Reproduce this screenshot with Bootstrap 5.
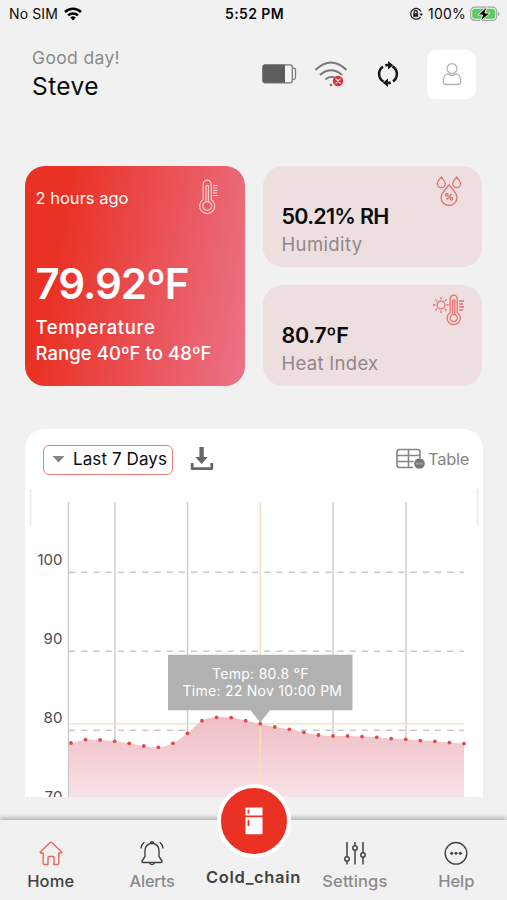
<!DOCTYPE html>
<html lang="en">
<head>
<meta charset="utf-8">
<meta name="viewport" content="width=device-width, initial-scale=1">
<title>Cold chain</title>
<link href="https://cdn.jsdelivr.net/npm/bootstrap@5.3.0/dist/css/bootstrap.min.css" rel="stylesheet">
<style>
body{font-family:Inter,"Liberation Sans",sans-serif;background:#f1f1f1;color:#0b0b0b}
svg{display:block;flex:none}
.screen{width:507px;height:900px}
.statusbar{height:28px;font-size:14px;line-height:28px;padding:0 7px 0 9px}
.st-side{width:200px}
.topbar{height:56px;margin-top:18px;padding:0 31px 0 32px}
.greet{font-size:17.5px;line-height:24px;color:#8b8b8b}
.who{font-size:24.5px;line-height:33px}
.avatar{width:49px;height:49px;border-radius:9px}
.tiles{margin-top:64px;padding:0 25px;height:220px;gap:18px}
.temp{width:220px;border-radius:20px;background:linear-gradient(100deg,#e93223 0,#e93225 18%,#ea4b4d 50%,#eb7488 100%);padding:20px 11px 0 10.5px}
.ago{font-size:16.500px;line-height:24px}
.big{font-size:42px;line-height:50px;font-weight:600}
.rng{font-size:18.5px;line-height:26px;font-weight:500}
.tile{height:101px;border-radius:20px;background:#eddfe0;padding:36px 18px 0 18.5px}
.val{font-size:21.5px;line-height:28px;font-weight:600}
.lbl{font-size:18.5px;line-height:29px;color:#8f8889}
.panel{margin:42.5px 24.500px 0 25px;height:368.500px;border-radius:20px 20px 0 0}
.tools{height:55.500px;padding:16px 13.500px 0 18px}
.drop{width:130px;height:30px;border:1.4px solid #ea7b76;border-radius:6px;font-size:17px}
.tbl{font-size:16.5px;color:#868686}
.tabs{height:80px;margin-top:23px;box-shadow:0 -2px 5px rgba(0,0,0,.3);font-size:16.5px;font-weight:500;line-height:23px;background:#f1f1f1}
.tabs a{width:101.4px;color:#8a8a8a;text-decoration:none;padding-top:20px;height:80px}
.tabs a svg{margin-bottom:4px}
.fab{width:74px;height:74px;background:#e93223;border:4px solid #fff;top:-36px;left:14px}
.dark{color:#424242!important}
</style>
</head>
<body>
<div class="screen d-flex flex-column overflow-hidden">
<div class="statusbar d-flex justify-content-between">
 <div class="st-side d-flex align-items-center"><span class="t-sim">No SIM</span>
  <svg style="margin-left:6px" width="18" height="14" viewBox="0 0 18 14" fill="none" stroke="#000" stroke-width="2.5"><path d="M1 5a11.6 11.6 0 0 1 16 0M4 8.4a7.3 7.3 0 0 1 10 0"/><path d="M6.2 10.6a4 4 0 0 1 5.6 0L9 13.5z" fill="#000" stroke="none"/></svg></div>
 <span class="t-clock fw-semibold">5:52 PM</span>
 <div class="st-side d-flex align-items-center justify-content-end">
  <svg width="14" height="14" viewBox="0 0 14 14" fill="none" stroke="#222" stroke-width="1.3"><path d="M12 4.500A5.400 5.400 0 1 0 11.500 10"/><path d="M10.300 6.500h3.700l-1.800 2.800z" fill="#222" stroke="none"/><rect x="4.200" y="6.200" width="5" height="3.600" fill="#222" stroke="none"/><path d="M5.200 6.500V5a1.500 1.500 0 0 1 3 0v1.500"/></svg>
  <span class="t-pct" style="margin:0 4px 0 5px">100%</span>
  <svg width="30" height="16" viewBox="0 0 30 16"><rect x=".7" y="1.2" width="26" height="13.2" rx="4" fill="#f1f1f1" stroke="#a5a5a5" stroke-width="1.2"/><rect x="2.2" y="2.8" width="23" height="10" rx="2.5" fill="#5fcd66"/><path d="M28 5.5q1.600.300 1.600 2.300T28 10z" fill="#a5a5a5"/><path d="M17 .6 8 9h4.600L10.500 15.400 20 7h-5z" fill="#000" stroke="#f1f1f1" stroke-width="1"/></svg>
 </div>
</div>

<header class="topbar d-flex align-items-center">
 <div class="me-auto"><div class="greet"><span class="t-greet">Good day!</span></div><div class="who"><span class="t-who">Steve</span></div></div>
 <svg width="35" height="20" viewBox="0 0 35 20"><rect x=".8" y=".8" width="29.500" height="18" rx="2.200" fill="#f6f6f6" stroke="#777" stroke-width="1.300"/><path d="M2.500 .8H23v18H2.500Q.8 18.800.8 17V2.500Q.8.8 2.500.8z" fill="#5d5d5d"/><path d="M30.500 4.200h1.200q1.800 0 1.800 1.800v7.600q0 1.800-1.800 1.800h-1.200" fill="none" stroke="#777" stroke-width="1.200"/></svg>
 <svg style="margin-left:17px" width="34" height="28" viewBox="0 0 34 28" fill="none" stroke="#777" stroke-width="1.800" stroke-linecap="round"><path d="M2 9.500Q17-4.500 32 9.500M6.500 14.500q10.500-8.500 21 0M12 19q4-3.200 8-1.600"/><circle cx="17" cy="25" r="1.300" fill="#777" stroke="none"/><circle cx="24" cy="21" r="5.200" fill="#e52f35" stroke="none"/><path d="M21.900 18.900l4.200 4.200m0-4.200-4.200 4.200" stroke="#fff" stroke-width="1.100"/></svg>
 <svg style="margin-left:28px" width="24" height="26" viewBox="0 0 24 26" fill="none" stroke="#171717" stroke-width="2.500"><path d="M7.500 20.600A8.900 8.900 0 0 1 7 5.600M9.300 4.500Q11 3.800 13.500 4.200M16.500 5.400A8.900 8.900 0 0 1 17 20.400M14.700 21.500Q13 22.200 10.500 21.800"/><path d="M12 0v8.600L17.200 4.300zM12 17.400V26L6.800 21.700z" fill="#171717" stroke="none"/></svg>
 <div class="avatar bg-white d-flex align-items-center justify-content-center" style="margin-left:27px"><svg width="20" height="24" viewBox="0 0 20 24" fill="none" stroke="#b5b5b5" stroke-width="1.300"><circle cx="10" cy="6.500" r="4.900"/><path d="M5.500 11.500Q1.200 14 1.200 19.500q0 3 3 3h11.600q3 0 3-3 0-5.500-4.300-8Q10 15.500 5.500 11.500z"/></svg></div>
</header>

<section class="tiles d-flex">
 <div class="temp text-white position-relative">
  <div class="ago"><span class="t-ago">2 hours ago</span></div>
  <svg class="position-absolute" style="left:173px;top:13px" width="21" height="38" viewBox="0 0 21 38" fill="none" stroke="#ffd0cc" stroke-width="1.200"><path d="M5.200 20.500V5.200a4 4 0 0 1 8 0v15.300a7.600 7.600 0 1 1-8 0z"/><circle cx="9.200" cy="27" r="4.400"/><path d="M8 22.500V7q1.200-1.500 2.400 0v15.500M15 6.500h5M15 9h4M15 11.500h5M15 14h4M15 16.500h5"/></svg>
  <div class="big" style="margin-top:49px"><span class="t-big">79.92ºF</span></div>
  <div class="rng" style="margin-top:5px"><span class="t-temp">Temperature</span><br><span class="t-rng text-nowrap">Range 40ºF to 48ºF</span></div>
 </div>
 <div class="flex-fill d-flex flex-column justify-content-between">
  <div class="tile position-relative"><div class="val"><span class="t-rh">50.21% RH</span></div><div class="lbl"><span class="t-hum">Humidity</span></div>
   <svg class="position-absolute" style="left:173px;top:10px" width="26" height="31" viewBox="0 0 26 31" fill="none" stroke="#e86f70" stroke-width="1.300"><path d="M5.300 1.200Q1.200 6 1.300 7.600a4 4 0 0 0 8 0Q9.300 6 5.300 1.200zM20.700 1.200Q16.600 6 16.700 7.600a4 4 0 0 0 8 0Q24.700 6 20.700 1.200zM13 9Q5 17.500 5 21.500a8 8 0 0 0 16 0Q21 17.500 13 9z"/><path d="M10.600 23.500l5-5.500" stroke-width="1.500"/><circle cx="10.800" cy="18.800" r="1.300"/><circle cx="15.400" cy="22.800" r="1.300"/></svg></div>
  <div class="tile position-relative"><div class="val"><span class="t-hi">80.7ºF</span></div><div class="lbl"><span class="t-heat">Heat Index</span></div>
   <svg class="position-absolute" style="left:170px;top:9px" width="32" height="32" viewBox="0 0 32 32" fill="none" stroke="#e8706c" stroke-width="1.300"><circle cx="8" cy="11" r="3.900"/><path d="M8 3v2.500M8 16.500V19M0 11h2.500M13.500 11h2.300M2.400 5.400l1.800 1.800M11.800 14.800l1.800 1.800M2.400 16.600l1.800-1.800M11.800 7.200l1.800-1.800" /><path d="M17.200 18.500V4.700a3.500 3.500 0 0 1 7 0v13.800a6.600 6.600 0 1 1-7 0z"/><circle cx="20.700" cy="24" r="3.600"/><path d="M19.600 20.500V6.500q1.100-1.400 2.200 0v14M26 7h5M26 10h4M26 13h5M26 16h4" /></svg></div>
 </div>
</section>

<section class="panel bg-white overflow-hidden">
 <div class="tools d-flex align-items-start">
  <div class="drop d-flex align-items-center"><svg style="margin:0 8px 0 8px" width="13" height="7" viewBox="0 0 13 7"><path d="M.5 0h12l-6 6.500z" fill="#858585"/></svg><span class="t-days text-nowrap">Last 7 Days</span></div>
  <svg style="margin:1px 0 0 17px" width="24" height="26" viewBox="0 0 24 26"><path d="M9.400 1h4.400v10h4l-6.200 7-6.200-7h4z" fill="#666"/><path d="M2.200 17v5.700h19.600V17" fill="none" stroke="#666" stroke-width="2.800" stroke-linejoin="round"/></svg>
  <div class="tbl ms-auto d-flex align-items-center" style="height:29px"><svg style="margin-right:3px" width="29" height="22" viewBox="0 0 29 22" fill="none" stroke="#858585" stroke-width="1.600"><path d="M17 19.500H3.500Q1 19.500 1 17V4Q1 1.500 3.500 1.500h18Q24 1.500 24 4v6M1 7.500h23M1 13.500h16.500M12.500 1.500v18"/><circle cx="23.500" cy="15.500" r="5.300" fill="#777" stroke="none"/><path d="M20 15.500h7" stroke="#aaa" stroke-width="1.800" stroke-dasharray="1.800 .7"/></svg><span class="t-table">Table</span></div>
 </div>
 <svg id="chart" width="458" height="313" viewBox="25 484 458 313" font-family="Inter,'Liberation Sans',sans-serif">
  <defs><linearGradient id="area" x1="0" y1="717" x2="0" y2="797" gradientUnits="userSpaceOnUse"><stop offset="0" stop-color="#f0bdc5"/><stop offset="1" stop-color="#f8e2e6"/></linearGradient></defs>
  <path d="M30.500 489v37M477.500 489v37" stroke="#ededed" stroke-width="2"/>
  <path d="M69 572.300H464M69 651.300H464M69 730.300H464" stroke="#c9c9c9" stroke-width="1.500" stroke-dasharray="6.200 6"/>
  <path d="M68.500 502V797M115 502V797M187.500 502V797M333 502V797M406 502V797" stroke="#c8c8c8" stroke-width="1.300"/>
  <path d="M69 723.700H464" stroke="#fbdfc0" stroke-width="1.400"/>
  <path id="fill" fill="url(#area)"/>
  <path d="M260.300 502V797" stroke="#f8ddc5" stroke-width="1.600"/>
  <g id="dots" fill="#e04a4c"></g>
  <g fill="#4b4b4b" font-size="15"><text x="37.500" y="565" textLength="25">100</text><text x="43.500" y="644" textLength="19">90</text><text x="43.500" y="723" textLength="19">80</text><text x="44.500" y="802" textLength="18">70</text></g>
  <path d="M168 654.700H352.500V710.300H270L260.300 722.500 250.500 710.300H168z" fill="#b1b1b1"/>
  <g fill="#fff" font-size="14"><text x="212" y="679" textLength="96.500">Temp: 80.8 °F</text><text x="182.500" y="696" textLength="159.500">Time: 22 Nov 10:00 PM</text></g>
 </svg>
</section>

<nav class="tabs d-flex position-relative text-center flex-shrink-0">
 <a href="#" class="dark d-flex flex-column align-items-center"><svg width="24" height="26" viewBox="0 0 24 26" fill="none" stroke="#e8655f" stroke-width="1.400" stroke-linejoin="round"><path d="M4.200 13v10.500q0 1 1 1H9v-7q0-1 1-1h4q1 0 1 1v7h3.800q1 0 1-1V13h2.400q1-.4.300-1.200L12.800 2.500q-.8-.6-1.600 0L1.500 11.800q-.7.800.300 1.200z"/></svg><span class="t-home">Home</span></a>
 <a href="#" class="d-flex flex-column align-items-center"><svg width="26" height="26" viewBox="0 0 26 26" fill="none" stroke="#424242" stroke-width="1.400" stroke-linecap="round" stroke-linejoin="round"><path d="M11.300 3.500a1.700 1.700 0 0 1 3.400 0Q20 5 20 11v5.500l3 4.500q.2 1.500-1 1.500H4q-1.200 0-1-1.500l3-4.500V11q0-6 5.300-7.500h3.400M10.500 22.800q2.500 3.600 5 0M5 2.500Q2.500 4.500 2 8M21 2.500q2.500 2 3 5.500"/></svg><span class="t-alerts">Alerts</span></a>
 <div class="position-relative" style="width:101.400px"><div class="fab rounded-circle position-absolute d-flex align-items-center justify-content-center"><svg width="18" height="28" viewBox="0 0 18 28"><path d="M.5.500h17v8H.5zM.5 10.200h17v17H.5z" fill="#fff"/><path d="M3.500 3v3.500M3.500 13v6" stroke="#e93223" stroke-width="1.800"/></svg></div><div class="dark fw-semibold" style="padding-top:46px"><span class="t-cold">Cold_chain</span></div></div>
 <a href="#" class="d-flex flex-column align-items-center"><svg width="22" height="26" viewBox="0 0 22 26" fill="none" stroke="#424242" stroke-width="1.500"><path d="M3 2v15M3 21v3.500M11 2v4M11 10v14.500M19 2v11M19 17v7.500"/><circle cx="3" cy="19" r="2.200"/><circle cx="11" cy="8" r="2.200"/><circle cx="19" cy="15" r="2.200"/></svg><span class="t-set">Settings</span></a>
 <a href="#" class="d-flex flex-column align-items-center"><svg width="24" height="26" viewBox="0 0 24 26" fill="none" stroke="#424242" stroke-width="1.400"><circle cx="12" cy="13.300" r="10.800"/><g fill="#424242" stroke="none"><circle cx="7.700" cy="13.300" r="1.500"/><circle cx="12" cy="13.300" r="1.500"/><circle cx="16.300" cy="13.300" r="1.500"/></g></svg><span class="t-help">Help</span></a>
</nav>
</div>
<script src="https://cdn.jsdelivr.net/npm/bootstrap@5.3.0/dist/js/bootstrap.bundle.min.js"></script>
<script>
// hourly readings plotted left to right
const ys=[743,739.6,740,741.3,743.3,746,747.3,743.3,733.3,720.7,717.3,717.6,720.7,723.7,727,729.3,732.3,735,736,736,736.6,737.3,738.6,739.3,740.6,741.3,742.6,743.6];
const pts=ys.map((y,i)=>[71+i*14.556,y]);
let d='M69 797V743.500L'+pts[0];
for(let i=1;i<pts.length;i++){const[a,b]=pts[i-1],[x,y]=pts[i],p=pts[i-2]||pts[i-1],n=pts[i+1]||pts[i];
 d+=`C${a+4.850} ${b+(y-p[1])/6} ${x-4.850} ${y-(n[1]-b)/6} ${x} ${y}`}
document.getElementById('fill').setAttribute('d',d+'V797z');
document.getElementById('dots').innerHTML=pts.map(([x,y])=>`<circle cx="${x}" cy="${y}" r="1.900"/>`).join('');
// even out label tracking so each line fills its intended measure
const widths={sim:49,clock:59,pct:38,greet:88,who:67,ago:93,big:153,temp:120,rng:176,rh:107,hum:81,hi:67,heat:97,days:94,table:41,home:47,alerts:45,cold:95,set:65,help:36};
for(const k in widths){const e=document.querySelector('.t-'+k);e.style.letterSpacing='0';
 const w=e.getBoundingClientRect().width,n=e.textContent.length,s=(widths[k]-w)/n;
 e.style.letterSpacing=s.toFixed(3)+'px'}
</script>
</body>
</html>
